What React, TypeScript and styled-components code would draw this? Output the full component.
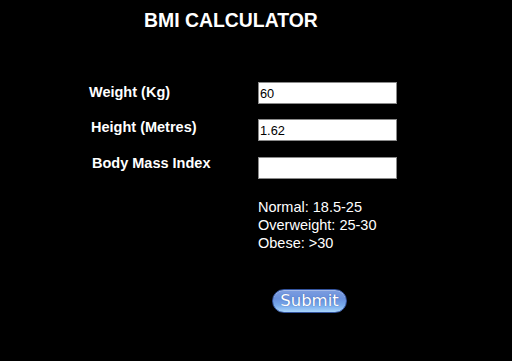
import React from "react";
import styled, { createGlobalStyle } from "styled-components";

const GlobalStyle = createGlobalStyle`
  html, body {
    margin: 0;
    padding: 0;
    background: #000;
  }
  body {
    font-family: "Liberation Sans", Arial, sans-serif;
    color: #fff;
  }
`;

const Page = styled.div`
  width: 512px;
  height: 361px;
  background: #000;
  box-sizing: border-box;
  padding-top: 9px;
  overflow: hidden;
`;

const Title = styled.h1`
  margin: 0;
  padding-left: 144px;
  font-size: 19.4px;
  line-height: 22px;
  font-weight: bold;
  color: #fff;
`;

const Form = styled.form`
  display: flex;
  flex-direction: column;
  margin-top: 51px;
`;

const Row = styled.div<{ $gap: number }>`
  display: grid;
  grid-template-columns: 258px 139px;
  align-items: start;
  margin-top: ${(p) => p.$gap}px;
`;

const Label = styled.label<{ $indent: number; $shift: number }>`
  padding-left: ${(p) => p.$indent}px;
  margin-top: ${(p) => p.$shift}px;
  font-size: 14.5px;
  line-height: 17px;
  font-weight: bold;
  color: #fff;
`;

const Field = styled.input`
  box-sizing: border-box;
  width: 139px;
  height: 22px;
  margin: 0;
  padding: 0 1px;
  border: 1px solid #8a8a8a;
  background: #fff;
  color: #000;
  font-family: "Liberation Sans", Arial, sans-serif;
  font-size: 12.8px;
  outline: none;
`;

const Legend = styled.div`
  margin: 19px 0 0 258px;
  font-size: 14.5px;
  line-height: 18px;
  color: #fff;
`;

const Actions = styled.div`
  margin: 37px 0 0 272px;
`;

const SubmitButton = styled.button`
  box-sizing: border-box;
  width: 75px;
  height: 24px;
  padding: 0;
  border: 1px solid #34549e;
  border-radius: 12px;
  background: linear-gradient(
    to bottom,
    #7d9de0 0%,
    #6890dc 40%,
    #78aaec 70%,
    #aad6fb 100%
  );
  box-shadow: inset 0 1px 0 rgba(255, 255, 255, 0.3);
  color: #fff;
  font-family: "DejaVu Sans", Verdana, sans-serif;
  font-size: 16.5px;
  line-height: 20px;
  text-shadow: 0 0 1px rgba(30, 60, 130, 0.7);
  cursor: pointer;
`;

export default function App() {
  return (
    <>
      <GlobalStyle />
      <Page>
        <Title>BMI CALCULATOR</Title>
        <Form onSubmit={(e) => e.preventDefault()}>
          <Row $gap={0}>
            <Label $indent={89} $shift={2}>Weight (Kg)</Label>
            <Field type="text" defaultValue="60" />
          </Row>
          <Row $gap={15}>
            <Label $indent={91} $shift={0}>Height (Metres)</Label>
            <Field type="text" defaultValue="1.62" />
          </Row>
          <Row $gap={16}>
            <Label $indent={92} $shift={-2}>Body Mass Index</Label>
            <Field type="text" defaultValue="" />
          </Row>
        </Form>
        <Legend>
          <div>Normal: 18.5-25</div>
          <div>Overweight: 25-30</div>
          <div>Obese: &gt;30</div>
        </Legend>
        <Actions>
          <SubmitButton type="submit">Submit</SubmitButton>
        </Actions>
      </Page>
    </>
  );
}
